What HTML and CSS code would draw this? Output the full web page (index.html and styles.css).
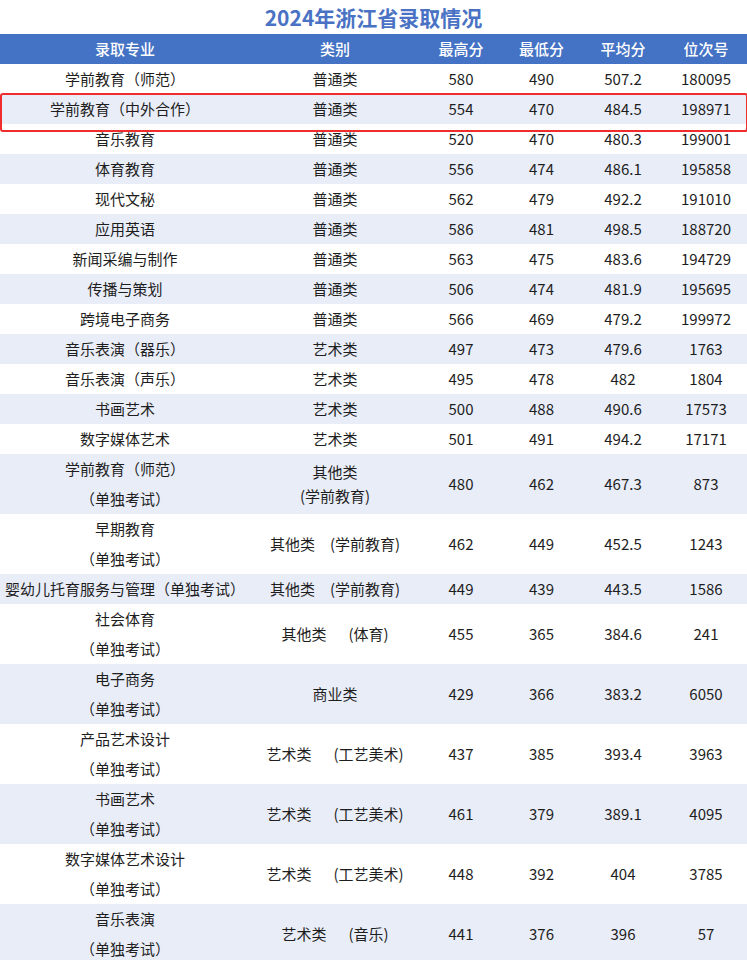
FILE: index.html
```html
<!DOCTYPE html>
<html lang="zh-CN">
<head>
<meta charset="utf-8">
<title>2024年浙江省录取情况</title>
<link rel="stylesheet" href="styles.css">
</head>
<body>
<div class="page">
  <h1 class="title">2024年浙江省录取情况</h1>
  <div class="table">
    <div class="row head">
      <div>录取专业</div><div>类别</div><div>最高分</div><div>最低分</div><div>平均分</div><div>位次号</div>
    </div>
    <div class="row"><div>学前教育（师范）</div><div>普通类</div><div>580</div><div>490</div><div>507.2</div><div>180095</div></div>
    <div class="row alt hl"><div>学前教育（中外合作）</div><div>普通类</div><div>554</div><div>470</div><div>484.5</div><div>198971</div></div>
    <div class="row"><div>音乐教育</div><div>普通类</div><div>520</div><div>470</div><div>480.3</div><div>199001</div></div>
    <div class="row alt"><div>体育教育</div><div>普通类</div><div>556</div><div>474</div><div>486.1</div><div>195858</div></div>
    <div class="row"><div>现代文秘</div><div>普通类</div><div>562</div><div>479</div><div>492.2</div><div>191010</div></div>
    <div class="row alt"><div>应用英语</div><div>普通类</div><div>586</div><div>481</div><div>498.5</div><div>188720</div></div>
    <div class="row"><div>新闻采编与制作</div><div>普通类</div><div>563</div><div>475</div><div>483.6</div><div>194729</div></div>
    <div class="row alt"><div>传播与策划</div><div>普通类</div><div>506</div><div>474</div><div>481.9</div><div>195695</div></div>
    <div class="row"><div>跨境电子商务</div><div>普通类</div><div>566</div><div>469</div><div>479.2</div><div>199972</div></div>
    <div class="row alt"><div>音乐表演（器乐）</div><div>艺术类</div><div>497</div><div>473</div><div>479.6</div><div>1763</div></div>
    <div class="row"><div>音乐表演（声乐）</div><div>艺术类</div><div>495</div><div>478</div><div>482</div><div>1804</div></div>
    <div class="row alt"><div>书画艺术</div><div>艺术类</div><div>500</div><div>488</div><div>490.6</div><div>17573</div></div>
    <div class="row"><div>数字媒体艺术</div><div>艺术类</div><div>501</div><div>491</div><div>494.2</div><div>17171</div></div>
    <div class="row alt"><div>学前教育（师范）<br>（单独考试）</div><div class="tight">其他类<br>(学前教育)</div><div>480</div><div>462</div><div>467.3</div><div>873</div></div>
    <div class="row"><div>早期教育<br>（单独考试）</div><div>其他类<span class="sub s1">(学前教育)</span></div><div>462</div><div>449</div><div>452.5</div><div>1243</div></div>
    <div class="row alt"><div>婴幼儿托育服务与管理（单独考试）</div><div>其他类<span class="sub s1">(学前教育)</span></div><div>449</div><div>439</div><div>443.5</div><div>1586</div></div>
    <div class="row"><div>社会体育<br>（单独考试）</div><div>其他类<span class="sub">(体育)</span></div><div>455</div><div>365</div><div>384.6</div><div>241</div></div>
    <div class="row alt"><div>电子商务<br>（单独考试）</div><div>商业类</div><div>429</div><div>366</div><div>383.2</div><div>6050</div></div>
    <div class="row"><div>产品艺术设计<br>（单独考试）</div><div>艺术类<span class="sub">(工艺美术)</span></div><div>437</div><div>385</div><div>393.4</div><div>3963</div></div>
    <div class="row alt"><div>书画艺术<br>（单独考试）</div><div>艺术类<span class="sub">(工艺美术)</span></div><div>461</div><div>379</div><div>389.1</div><div>4095</div></div>
    <div class="row"><div>数字媒体艺术设计<br>（单独考试）</div><div>艺术类<span class="sub">(工艺美术)</span></div><div>448</div><div>392</div><div>404</div><div>3785</div></div>
    <div class="row alt"><div>音乐表演<br>（单独考试）</div><div>艺术类<span class="sub">(音乐)</span></div><div>441</div><div>376</div><div>396</div><div>57</div></div>
  </div>
</div>
</body>
</html>
```

FILE: styles.css
```css
* { box-sizing: border-box; }
html, body {
  margin: 0;
  padding: 0;
  background: #ffffff;
}
body {
  font-family: "Noto Sans CJK SC", "Noto Sans", sans-serif;
  color: #1e1e1e;
  font-size: 15px;
}
.page {
  width: 747px;
}
.title {
  margin: 0;
  height: 34px;
  line-height: 34px;
  text-align: center;
  font-size: 21px;
  font-weight: 700;
  color: #4a72c4;
}
.table {
  display: flex;
  flex-direction: column;
}
.row {
  display: grid;
  grid-template-columns: 250px 170px 82px 79px 84px 82px;
  background: #ffffff;
  position: relative;
}
.row > div {
  display: flex;
  align-items: center;
  justify-content: center;
  text-align: center;
  line-height: 30px;
  min-height: 30px;
  white-space: nowrap;
}
.row.alt {
  background: #e9edf8;
}
.row.head {
  background: #4472c4;
  color: #ffffff;
}
.row.head > div {
  font-weight: 500;
}
.row > div.tight {
  line-height: 24px;
}
.sub {
  margin-left: 22px;
}
.sub.s1 {
  margin-left: 15px;
}
.row.hl {
  z-index: 2;
}
.row.hl::after {
  content: "";
  position: absolute;
  left: 0;
  top: -1px;
  width: 744px;
  height: 35px;
  border: 2px solid #f02d2d;
  border-radius: 3px;
  pointer-events: none;
}
```
